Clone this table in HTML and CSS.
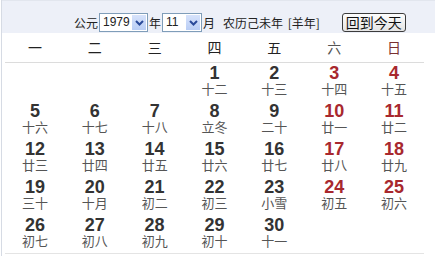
FILE: index.html
```html
<!DOCTYPE html>
<html lang="zh">
<head>
<meta charset="utf-8">
<link rel="stylesheet" href="styles.css">
</head>
<body>
<div class="cal">
  <div class="head">
    <span class="lbl">公元</span>
    <span class="sel sel-year"><span class="val">1979</span><span class="arr"><svg width="9" height="6" viewBox="0 0 9 6"><path d="M1 1 L4.5 4.5 L8 1" fill="none" stroke="#2a4a9a" stroke-width="2"/></svg></span></span>
    <span class="lbl">年</span>
    <span class="sel sel-month"><span class="val">11</span><span class="arr"><svg width="9" height="6" viewBox="0 0 9 6"><path d="M1 1 L4.5 4.5 L8 1" fill="none" stroke="#2a4a9a" stroke-width="2"/></svg></span></span>
    <span class="lbl">月</span>
    <span class="lunar">农历己未年 [羊年]</span>
    <span class="btn">回到今天</span>
  </div>
  <div class="week">
    <span>一</span><span>二</span><span>三</span><span>四</span><span>五</span><span class="sat">六</span><span class="sun">日</span>
  </div>
  <div class="days">
    <div class="d"></div><div class="d"></div><div class="d"></div>
    <div class="d"><b>1</b><i>十二</i></div>
    <div class="d"><b>2</b><i>十三</i></div>
    <div class="d we"><b>3</b><i>十四</i></div>
    <div class="d we"><b>4</b><i>十五</i></div>
    <div class="d"><b>5</b><i>十六</i></div>
    <div class="d"><b>6</b><i>十七</i></div>
    <div class="d"><b>7</b><i>十八</i></div>
    <div class="d"><b>8</b><i>立冬</i></div>
    <div class="d"><b>9</b><i>二十</i></div>
    <div class="d we"><b>10</b><i>廿一</i></div>
    <div class="d we"><b>11</b><i>廿二</i></div>
    <div class="d"><b>12</b><i>廿三</i></div>
    <div class="d"><b>13</b><i>廿四</i></div>
    <div class="d"><b>14</b><i>廿五</i></div>
    <div class="d"><b>15</b><i>廿六</i></div>
    <div class="d"><b>16</b><i>廿七</i></div>
    <div class="d we"><b>17</b><i>廿八</i></div>
    <div class="d we"><b>18</b><i>廿九</i></div>
    <div class="d"><b>19</b><i>三十</i></div>
    <div class="d"><b>20</b><i>十月</i></div>
    <div class="d"><b>21</b><i>初二</i></div>
    <div class="d"><b>22</b><i>初三</i></div>
    <div class="d"><b>23</b><i>小雪</i></div>
    <div class="d we"><b>24</b><i>初五</i></div>
    <div class="d we"><b>25</b><i>初六</i></div>
    <div class="d"><b>26</b><i>初七</i></div>
    <div class="d"><b>27</b><i>初八</i></div>
    <div class="d"><b>28</b><i>初九</i></div>
    <div class="d"><b>29</b><i>初十</i></div>
    <div class="d"><b>30</b><i>十一</i></div>
  </div>
</div>
</body>
</html>
```
FILE: styles.css
```css
html, body {
  margin: 0;
  padding: 0;
  background: #fff;
}
.cal {
  width: 434px;
  height: 256px;
  border-left: 1px solid #d6dbe4;
  margin-left: 1px;
  box-sizing: border-box;
  font-family: "Noto Sans CJK SC", "Liberation Sans", sans-serif;
  color: #333;
}
.head {
  height: 33px;
  box-sizing: border-box;
  background: #edf0f8;
  border-top: 1px solid #e2e6ee;
  display: flex;
  align-items: center;
  padding: 11px 0 0 72px;
  font-size: 12px;
  line-height: 14px;
  color: #222;
}
.lbl {
  display: inline-block;
}
.sel {
  display: inline-flex;
  height: 19px;
  box-sizing: border-box;
  border: 1px solid #7f9db9;
  background: #fff;
  margin: 0 1px;
}
.sel-year { width: 49px; }
.sel-month { width: 40px; }
.sel .val {
  flex: 1;
  font-family: "Liberation Sans", sans-serif;
  font-size: 12px;
  line-height: 17px;
  padding-left: 3px;
}
.sel .arr {
  width: 16px;
  background: linear-gradient(#d7e3fb, #b9cdf5);
  border: 1px solid #fff;
  box-sizing: border-box;
  display: flex;
  align-items: center;
  justify-content: center;
}
.lunar {
  margin-left: 8px;
  word-spacing: 2px;
}
.btn {
  margin-left: 22px;
  height: 19px;
  box-sizing: border-box;
  border: 1px solid #3c3c3c;
  border-radius: 3px;
  background: linear-gradient(#fdfdfd, #e4e4e4);
  font-size: 14px;
  line-height: 17px;
  padding: 0 3px;
  color: #111;
}
.week {
  display: grid;
  grid-template-columns: repeat(7, 1fr);
  width: 419px;
  margin-left: 3px;
  height: 29px;
  border-bottom: 1px solid #dcdcdc;
  font-size: 14px;
  line-height: 29px;
  text-align: center;
  color: #222;
}
.week .sat { color: #555; }
.week .sun { color: #7a3030; }
.days {
  display: grid;
  grid-template-columns: repeat(7, 1fr);
  grid-auto-rows: 38px;
  width: 419px;
  margin-left: 3px;
  height: 190px;
  border-bottom: 1px solid #e4e4e4;
}
.d {
  text-align: center;
  padding-top: 2px;
}
.d b {
  display: block;
  font-family: "Liberation Sans", Arial, sans-serif;
  font-weight: bold;
  font-size: 18px;
  line-height: 17px;
  color: #333;
}
.d i {
  display: block;
  font-style: normal;
  font-size: 13px;
  line-height: 14px;
  color: #555;
}
.d.we b { color: #a8282e; }
```
